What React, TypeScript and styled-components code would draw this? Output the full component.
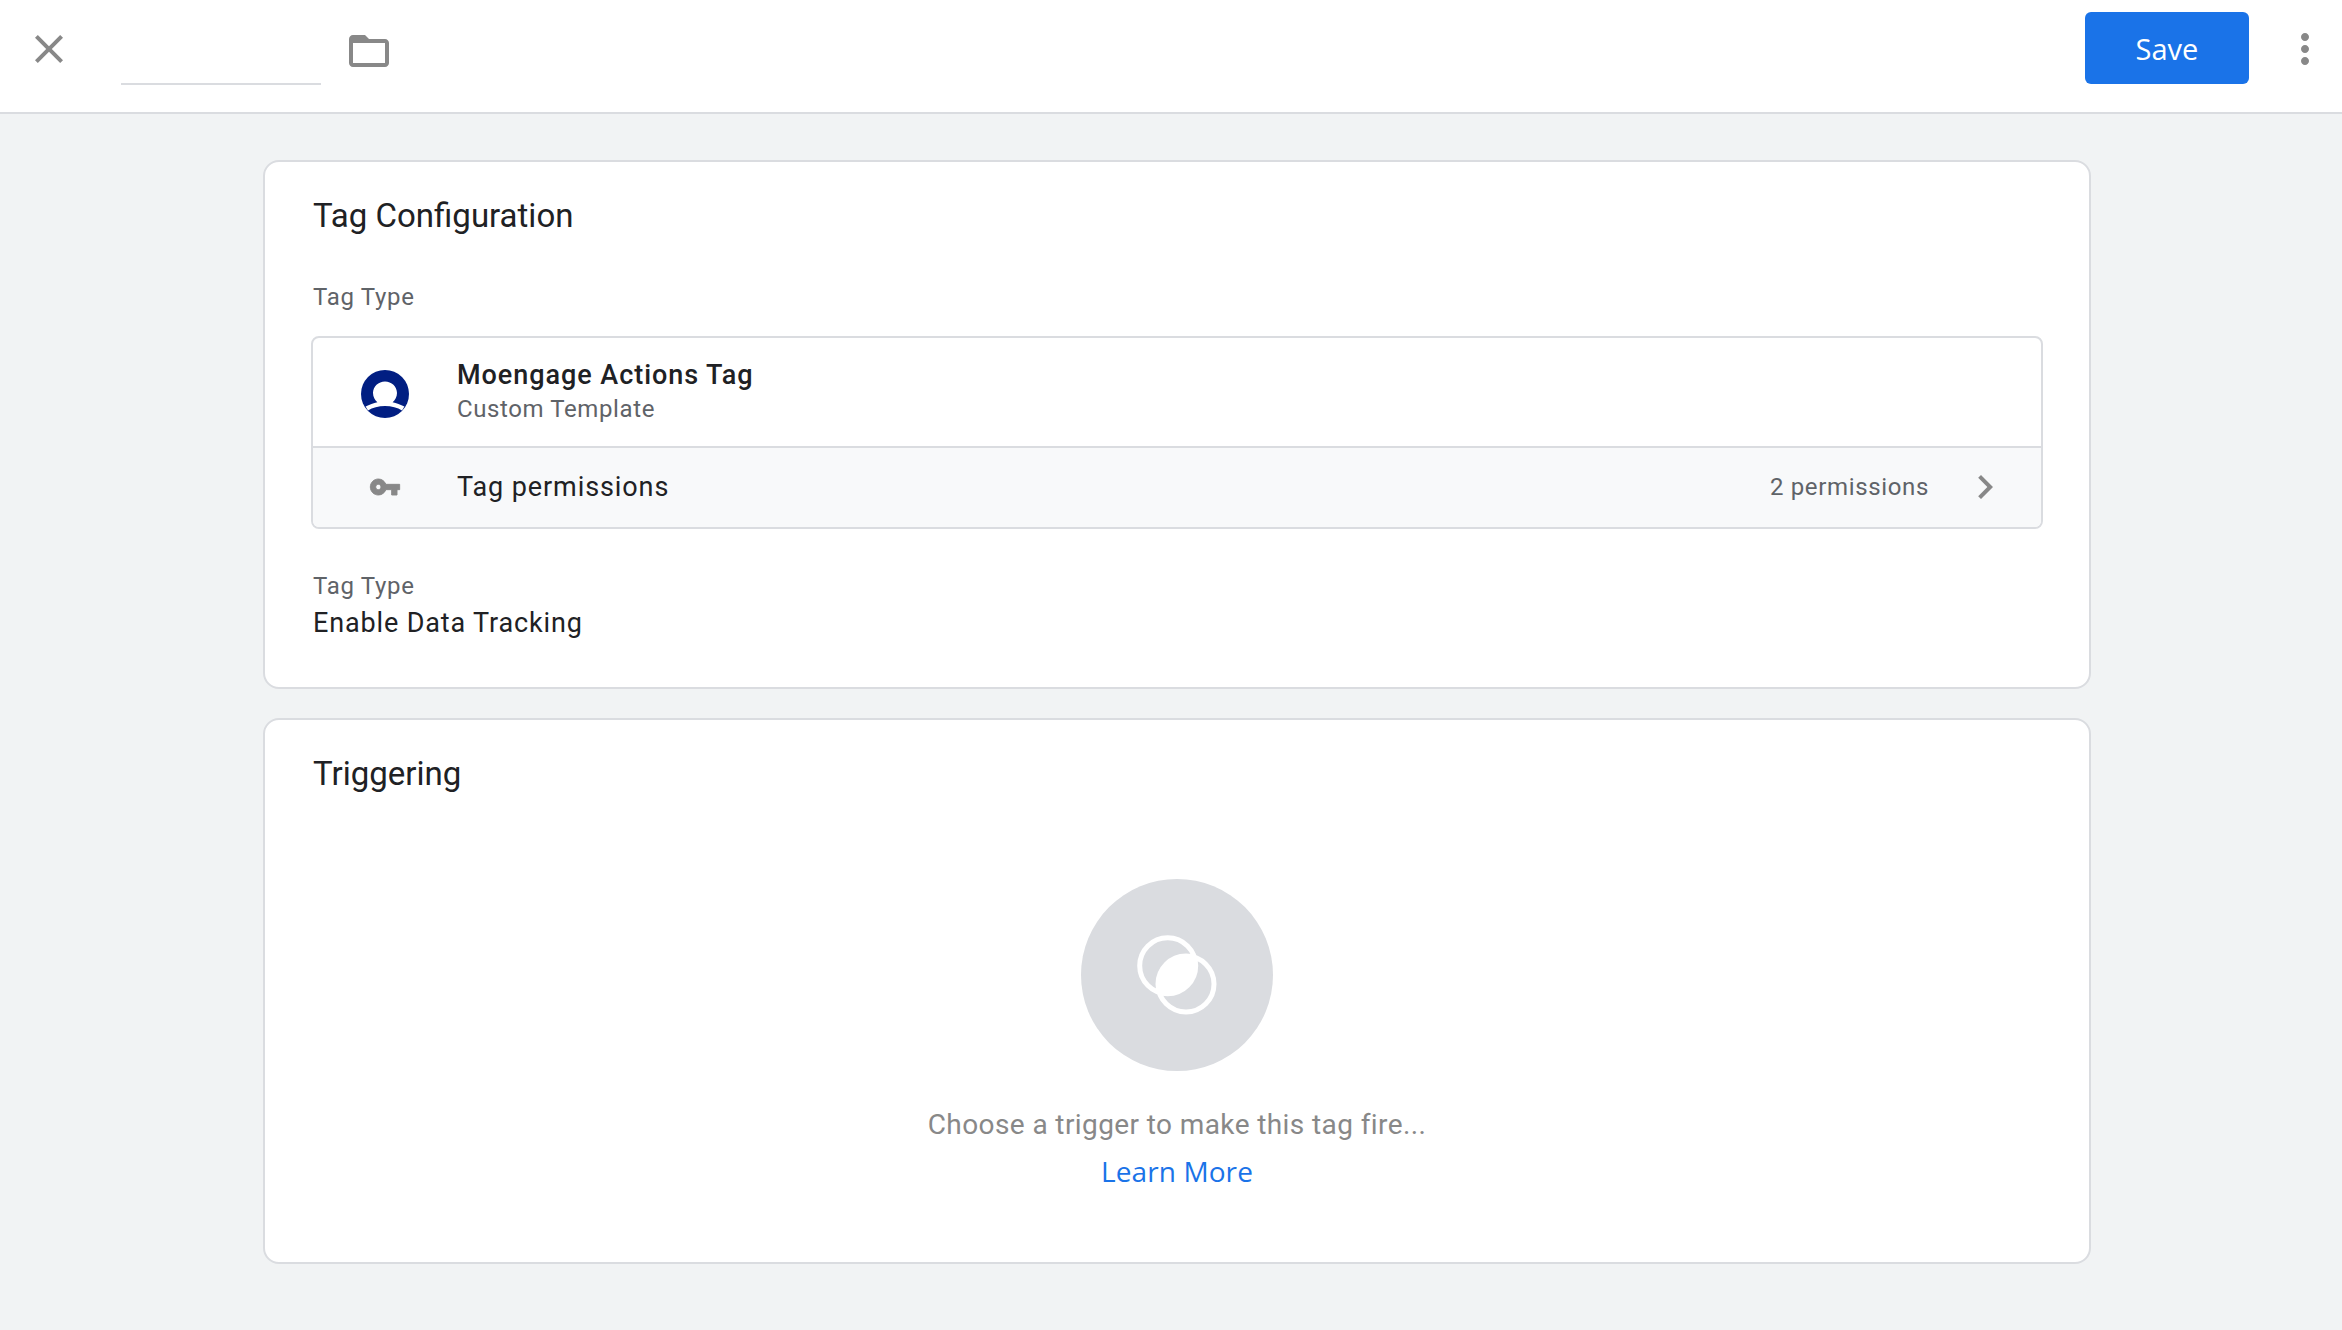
import React from 'react'
import styled, { createGlobalStyle } from 'styled-components'

const GlobalStyle = createGlobalStyle`
    html, body {
        margin: 0;
        padding: 0;
        background: #f1f3f4;
        font-family: Roboto, "Liberation Sans", sans-serif;
        color: #202124;
    }
    * {
        box-sizing: border-box;
    }
`

const MaterialIcon: React.FunctionComponent<{ d: string; className?: string }> = ({ d, className }) => (
    <IconSvg className={className} viewBox="0 0 24 24">
        <path d={d} />
    </IconSvg>
)

const CLOSE = 'M19 6.41L17.59 5 12 10.59 6.41 5 5 6.41 10.59 12 5 17.59 6.41 19 12 13.41 17.59 19 19 17.59 13.41 12z'
const FOLDER = 'M20 6h-8l-2-2H4c-1.1 0-1.99.9-1.99 2L2 18c0 1.1.9 2 2 2h16c1.1 0 2-.9 2-2V8c0-1.1-.9-2-2-2zm0 12H4V8h16v10z'
const KEBAB = 'M12 8c1.1 0 2-.9 2-2s-.9-2-2-2-2 .9-2 2 .9 2 2 2zm0 2c-1.1 0-2 .9-2 2s.9 2 2 2 2-.9 2-2-.9-2-2-2zm0 6c-1.1 0-2 .9-2 2s.9 2 2 2 2-.9 2-2-.9-2-2-2z'
const KEY = 'M12.65 10C11.83 7.67 9.61 6 7 6c-3.31 0-6 2.69-6 6s2.69 6 6 6c2.61 0 4.83-1.67 5.65-4H17v4h4v-4h2v-4H12.65zM7 14c-1.1 0-2-.9-2-2s.9-2 2-2 2 .9 2 2-.9 2-2 2z'
const CHEVRON = 'M10 6L8.59 7.41 13.17 12l-4.58 4.59L10 18l6-6z'

const MoengageLogo = () => (
    <LogoSvg viewBox="0 0 48 48">
        <circle cx="24" cy="24" r="24" fill="#011e82" />
        <path
            fill="#fff"
            d="M12 23c0-6.600 5.400-11.600 12-11.600S36 16.400 36 23c0 4-1.900 7-4.400 9.200 3.800.7 8 2.200 11.800 4.400l-2.400 3.800C36.500 37.800 30.500 36 24 36S11.500 37.800 7 40.400l-2.400-3.800c3.800-2.200 8-3.700 11.800-4.400C13.900 30 12 27 12 23z"
        />
    </LogoSvg>
)

const TriggerGlyph = () => (
    <GlyphSvg viewBox="0 0 80 80">
        <defs>
            <clipPath id="first-ring">
                <circle cx="30.7" cy="30.7" r="28" />
            </clipPath>
        </defs>
        <circle cx="49" cy="49" r="28" fill="#fff" clipPath="url(#first-ring)" />
        <circle cx="30.7" cy="30.7" r="28" fill="none" stroke="#fff" strokeWidth="5" />
        <circle cx="49" cy="49" r="28" fill="none" stroke="#fff" strokeWidth="5" />
    </GlyphSvg>
)

export default function App() {
    return (
        <>
            <GlobalStyle />
            <Header>
                <MaterialIcon d={CLOSE} />
                <NameInput />
                <FolderIcon d={FOLDER} />
                <Spacer />
                <SaveButton>Save</SaveButton>
                <MaterialIcon d={KEBAB} />
            </Header>
            <Content>
                <ConfigCard>
                    <CardTitle>Tag Configuration</CardTitle>
                    <FieldLabel>Tag Type</FieldLabel>
                    <TagBox>
                        <TagRow>
                            <IconCell>
                                <MoengageLogo />
                            </IconCell>
                            <div>
                                <TagName>Moengage Actions Tag</TagName>
                                <TagKind>Custom Template</TagKind>
                            </div>
                        </TagRow>
                        <PermissionRow>
                            <IconCell>
                                <KeySvg viewBox="0 0 24 24">
                                    <path d={KEY} />
                                </KeySvg>
                            </IconCell>
                            <PermissionLabel>Tag permissions</PermissionLabel>
                            <PermissionCount>2 permissions</PermissionCount>
                            <MaterialIcon d={CHEVRON} />
                        </PermissionRow>
                    </TagBox>
                    <SecondLabel>Tag Type</SecondLabel>
                    <FieldValue>Enable Data Tracking</FieldValue>
                </ConfigCard>
                <TriggerCard>
                    <CardTitle>Triggering</CardTitle>
                    <EmptyState>
                        <GlyphCircle>
                            <TriggerGlyph />
                        </GlyphCircle>
                        <EmptyText>Choose a trigger to make this tag fire...</EmptyText>
                        <LearnMore href="#">Learn More</LearnMore>
                    </EmptyState>
                </TriggerCard>
            </Content>
        </>
    )
}

const Header = styled.header`
    display: flex;
    align-items: flex-start;
    height: 114px;
    padding: 25px 13px 0 25px;
    background: #fff;
    border-bottom: 2px solid #dadce0;
`

const IconSvg = styled.svg`
    flex: 0 0 48px;
    width: 48px;
    height: 48px;
    fill: #888;
`

const FolderIcon = styled(MaterialIcon)`
    margin-top: 2px;
`

const NameInput = styled.div`
    width: 200px;
    height: 60px;
    margin: 0 24px 0 48px;
    border-bottom: 2px solid #dadce0;
`

const Spacer = styled.div`
    flex: 1;
`

const SaveButton = styled.button`
    width: 164px;
    height: 72px;
    margin: -13px 32px 0 0;
    border: 0;
    border-radius: 6px;
    background: #1a73e8;
    color: #fff;
    font-family: "Open Sans", Roboto, sans-serif;
    font-size: 29px;
    font-weight: 500;
`

const Content = styled.main`
    display: flex;
    flex-direction: column;
    gap: 29px;
    width: 1828px;
    margin-left: 263px;
    padding: 46px 0 66px;
`

const Card = styled.section`
    padding: 0 48px;
    background: #fff;
    border: 2px solid #dadce0;
    border-radius: 16px;
`

const ConfigCard = styled(Card)`
    height: 529px;
`

const TriggerCard = styled(Card)`
    height: 546px;
`

const CardTitle = styled.h2`
    margin: 0;
    padding-top: 32px;
    font-size: 33px;
    line-height: 44px;
    font-weight: 400;
`

const FieldLabel = styled.div`
    margin-top: 43px;
    font-size: 24px;
    line-height: 32px;
    letter-spacing: 0.7px;
    color: #5f6368;
`

const SecondLabel = styled(FieldLabel)`
    margin-top: 41px;
`

const TagBox = styled.div`
    margin: 23px 0 0 -2px;
    width: 1732px;
    border: 2px solid #dadce0;
    border-radius: 8px;
    overflow: hidden;
`

const TagRow = styled.div`
    display: flex;
    align-items: center;
    height: 110px;
    padding-bottom: 2px;
    border-bottom: 2px solid #dadce0;
`

const PermissionRow = styled.div`
    display: flex;
    align-items: center;
    height: 79px;
    padding: 0 32px 1px 0;
    background: #f8f9fa;
`

const IconCell = styled.div`
    display: flex;
    justify-content: center;
    flex: 0 0 144px;
`

const LogoSvg = styled.svg`
    width: 48px;
    height: 48px;
    margin-top: 5px;
`

const KeySvg = styled.svg`
    width: 32px;
    height: 32px;
    fill: #888;
    stroke: #888;
    stroke-width: 0.7;
`

const TagName = styled.div`
    font-size: 27px;
    line-height: 36px;
    font-weight: 500;
    letter-spacing: 0.95px;
`

const TagKind = styled.div`
    font-size: 24px;
    line-height: 32px;
    letter-spacing: 0.6px;
    color: #5f6368;
`

const PermissionLabel = styled.div`
    flex: 1;
    font-size: 27px;
    letter-spacing: 0.9px;
`

const PermissionCount = styled.div`
    margin-right: 32px;
    font-size: 24px;
    letter-spacing: 0.65px;
    color: #5f6368;
`

const FieldValue = styled.div`
    margin-top: 3px;
    font-size: 27px;
    line-height: 36px;
    letter-spacing: 0.85px;
`

const EmptyState = styled.div`
    display: flex;
    flex-direction: column;
    align-items: center;
    margin-top: 83px;
`

const GlyphCircle = styled.div`
    display: flex;
    align-items: center;
    justify-content: center;
    width: 192px;
    height: 192px;
    border-radius: 50%;
    background: #dadce0;
`

const GlyphSvg = styled.svg`
    width: 80px;
    height: 80px;
`

const EmptyText = styled.div`
    margin-top: 34px;
    font-size: 28px;
    line-height: 40px;
    letter-spacing: 0.4px;
    color: #888;
`

const LearnMore = styled.a`
    margin-top: 6px;
    font-family: "Open Sans", Roboto, sans-serif;
    font-size: 28px;
    line-height: 40px;
    font-weight: 500;
    letter-spacing: 0.1px;
    color: #1a73e8;
    text-decoration: none;
`
